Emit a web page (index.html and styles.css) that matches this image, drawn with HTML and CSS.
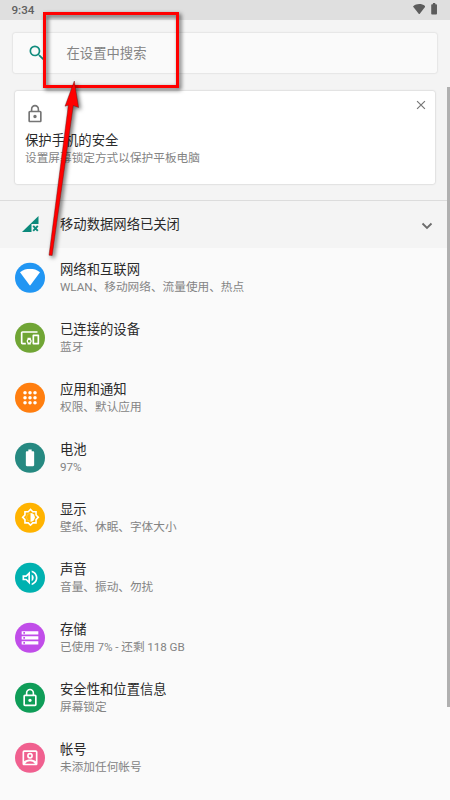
FILE: index.html
```html
<!DOCTYPE html>
<html lang="zh-CN">
<head>
<meta charset="utf-8">
<title>设置</title>
<link rel="stylesheet" href="styles.css">
</head>
<body>
<div class="screen">
  <header class="status">
    <span class="clock">9:34</span>
    <svg class="status-wifi" viewBox="0 0 24 20"><path d="M12 20 0 4.500C7-1.500 17-1.500 24 4.500Z"/></svg>
    <svg class="status-battery" viewBox="7 2 10 20"><path d="M15.670 4H14V2h-4v2H8.330C7.600 4 7 4.600 7 5.330v15.330C7 21.400 7.600 22 8.330 22h7.330c.740 0 1.340-.600 1.340-1.330V5.330C17 4.600 16.400 4 15.670 4z"/></svg>
  </header>
  <section class="top">
    <div class="search">
      <svg class="search-icon" viewBox="0 0 24 24"><path d="M15.500 14h-.790l-.280-.270A6.471 6.471 0 0 0 16 9.500 6.500 6.500 0 1 0 9.500 16c1.610 0 3.090-.590 4.230-1.570l.270.280v.790l5 4.990L20.490 19l-4.990-5zm-6 0C7.010 14 5 11.990 5 9.500S7.010 5 9.500 5 14 7.010 14 9.500 11.990 14 9.500 14z"/></svg>
      <span class="hint">在设置中搜索</span>
    </div>
    <div class="card">
      <div class="card-head">
        <svg class="card-lock" viewBox="0 0 24 24"><path d="M12 17c1.100 0 2-.900 2-2s-.900-2-2-2-2 .900-2 2 .900 2 2 2zm6-9h-1V6c0-2.760-2.240-5-5-5S7 3.240 7 6v2H6c-1.100 0-2 .900-2 2v10c0 1.100.900 2 2 2h12c1.100 0 2-.900 2-2V10c0-1.100-.900-2-2-2zM8.900 6c0-1.710 1.390-3.100 3.100-3.100s3.100 1.390 3.100 3.100v2H8.900V6zM18 20H6V10h12v10z"/></svg>
        <svg class="close" viewBox="0 0 14 14"><path d="M1.500 1.500l11 11M12.500 1.500l-11 11"/></svg>
      </div>
      <div class="title">保护手机的安全</div>
      <div class="sub">设置屏幕锁定方式以保护平板电脑</div>
    </div>
  </section>
  <section class="notice">
    <svg class="signal" viewBox="0 0 17 17"><path d="M16.500 0v8H9.500v8H0Z"/><path class="signal-x" d="M11.200 9.900l4.600 4.900M15.800 9.900l-4.600 4.900"/></svg>
    <span class="title">移动数据网络已关闭</span>
    <svg class="chevron" viewBox="0 0 12 8"><path d="M1.500 1.500 6 6l4.500-4.500"/></svg>
  </section>
  <main>
    <div class="row"><span class="disc blue"><svg class="wifi" viewBox="0 0 20 17"><path d="M10 17 0 3.500C6-1.100 14-1.100 20 3.500Z"/></svg></span><div><div class="title">网络和互联网</div><div class="sub">WLAN、移动网络、流量使用、热点</div></div></div>
    <div class="row"><span class="disc olive"><svg viewBox="0 0 24 24"><path d="M3 6h18V4H3c-1.100 0-2 .900-2 2v12c0 1.100.900 2 2 2h4v-2H3V6zm10 6H9v1.780c-.610.550-1 1.330-1 2.220s.390 1.670 1 2.220V20h4v-1.780c.610-.550 1-1.340 1-2.220s-.390-1.670-1-2.220V12zm-2 5.500c-.830 0-1.500-.670-1.500-1.500s.670-1.500 1.500-1.500 1.500.670 1.500 1.500-.670 1.500-1.500 1.500zM22 8h-6c-.500 0-1 .500-1 1v10c0 .500.500 1 1 1h6c.500 0 1-.500 1-1V9c0-.500-.500-1-1-1zm-1 10h-4v-8h4v8z"/></svg></span><div><div class="title">已连接的设备</div><div class="sub">蓝牙</div></div></div>
    <div class="row"><span class="disc orange"><svg viewBox="0 0 24 24"><g><circle cx="6" cy="6" r="2.100"/><circle cx="12" cy="6" r="2.100"/><circle cx="18" cy="6" r="2.100"/><circle cx="6" cy="12" r="2.100"/><circle cx="12" cy="12" r="2.100"/><circle cx="18" cy="12" r="2.100"/><circle cx="6" cy="18" r="2.100"/><circle cx="12" cy="18" r="2.100"/><circle cx="18" cy="18" r="2.100"/></g></svg></span><div><div class="title">应用和通知</div><div class="sub">权限、默认应用</div></div></div>
    <div class="row"><span class="disc teal"><svg viewBox="0 0 24 24"><path d="M15.670 4H14V2h-4v2H8.330C7.600 4 7 4.600 7 5.330v15.330C7 21.400 7.600 22 8.330 22h7.330c.740 0 1.340-.600 1.340-1.330V5.330C17 4.600 16.400 4 15.670 4z"/></svg></span><div><div class="title">电池</div><div class="sub">97%</div></div></div>
    <div class="row"><span class="disc amber"><svg viewBox="0 0 24 24"><path fill-rule="evenodd" d="M20 15.310 23.310 12 20 8.690V4h-4.690L12 .690 8.690 4H4v4.690L.690 12 4 15.310V20h4.690L12 23.310 15.310 20H20v-4.690zM18 14.480V18h-3.520L12 20.480 9.520 18H6v-3.520L3.520 12 6 9.520V6h3.520L12 3.520 14.480 6H18v3.520L20.480 12 18 14.480z"/><path d="M12 6.500a5.500 5.500 0 0 1 0 11z"/><path class="faint" d="M12 7a5 5 0 0 0 0 10"/></svg></span><div><div class="title">显示</div><div class="sub">壁纸、休眠、字体大小</div></div></div>
    <div class="row"><span class="disc cyan"><svg viewBox="0 0 24 24"><path d="M3 9v6h4l5 5V4L7 9H3zm7-.170v6.340L7.830 13H5v-2h2.830L10 8.830zM16.500 12A4.500 4.500 0 0 0 14 7.970v8.050A4.470 4.470 0 0 0 16.500 12zM14 3.230v2.060c2.890.860 5 3.540 5 6.710s-2.110 5.850-5 6.710v2.060c4.010-.910 7-4.490 7-8.770s-2.990-7.860-7-8.770z"/></svg></span><div><div class="title">声音</div><div class="sub">音量、振动、勿扰</div></div></div>
    <div class="row"><span class="disc purple"><svg viewBox="0 0 24 24"><path d="M2 20h20v-4H2v4zm2-3h2v2H4v-2zM2 4v4h20V4H2zm4 3H4V5h2v2zm-4 7h20v-4H2v4zm2-3h2v2H4v-2z"/></svg></span><div><div class="title">存储</div><div class="sub storage">已使用 7% - 还剩 118 GB</div></div></div>
    <div class="row"><span class="disc green"><svg viewBox="0 0 24 24"><path d="M12 17c1.100 0 2-.900 2-2s-.900-2-2-2-2 .900-2 2 .900 2 2 2zm6-9h-1V6c0-2.760-2.240-5-5-5S7 3.240 7 6v2H6c-1.100 0-2 .900-2 2v10c0 1.100.900 2 2 2h12c1.100 0 2-.900 2-2V10c0-1.100-.900-2-2-2zM8.900 6c0-1.710 1.390-3.100 3.100-3.100s3.100 1.390 3.100 3.100v2H8.900V6zM18 20H6V10h12v10z"/></svg></span><div><div class="title">安全性和位置信息</div><div class="sub">屏幕锁定</div></div></div>
    <div class="row"><span class="disc pink"><svg viewBox="0 0 24 24"><path d="M19 3H5a2 2 0 0 0-2 2v14c0 1.100.890 2 2 2h14c1.100 0 2-.900 2-2V5c0-1.100-.900-2-2-2zm0 2v11.200C17.200 14.700 14.700 14 12 14s-5.200.700-7 2.200V5h14zM6.500 19v-.400C7.700 17 9.900 16 12 16s4.300 1 5.500 2.600v.400h-11z"/><path fill-rule="evenodd" d="M12 6a3.500 3.500 0 1 0 0 7 3.500 3.500 0 0 0 0-7zm0 2a1.500 1.500 0 1 1 0 3 1.500 1.500 0 0 1 0-3z"/></svg></span><div><div class="title">帐号</div><div class="sub">未添加任何帐号</div></div></div>
  </main>
  <div class="scrollbar"></div>
  <div class="highlight"></div>
  <svg class="arrow" viewBox="0 0 60 190"><path d="M34.300 11 38.600 37.500 33.300 35.500 12.200 185.500 9 185.200 28.300 35.200 25 36.200Z"/></svg>
</div>
</body>
</html>
```
FILE: styles.css
```css
* { box-sizing: border-box; }
body {
  margin: 0;
  background: #fafafa;
  font-family: Roboto, "Noto Sans CJK SC", sans-serif;
}
svg { display: block; flex: none; }
.screen {
  position: relative;
  width: 450px;
  height: 800px;
  overflow: hidden;
}
.status {
  display: flex;
  align-items: center;
  height: 20px;
  padding: 0 12.500px 0 11.500px;
  background: #dfdfdf;
  color: #606060;
}
.clock { flex: 1; font-size: 11.670px; font-weight: 500; line-height: 20px; }
.status svg { fill: #5c5c5c; margin-bottom: 2px; }
.status-wifi { width: 12.500px; height: 10.500px; }
.status-battery { width: 6.200px; height: 11.500px; margin-left: 6px; }
.top {
  height: 181px;
  padding: 13px 13px 0;
  background: #f4f4f4;
  border-bottom: 1px solid #dcdcdc;
}
.search {
  display: flex;
  align-items: center;
  height: 40px;
  padding-left: 13.500px;
  background: #fafafa;
  border-radius: 2px;
  box-shadow: 0 0 2px rgba(0, 0, 0, .2);
}
.search-icon { width: 20px; height: 20px; fill: #128c7e; }
.hint { margin: 0 0 2px 20px; font-size: 13.330px; color: #848484; }
.card {
  height: 93px;
  margin: 18px 2px 0;
  padding: 0 10px;
  background: #fff;
  border-radius: 2px;
  box-shadow: 0 0 2px rgba(0, 0, 0, .26);
}
.card-head { display: flex; justify-content: space-between; height: 40px; }
.card-lock { width: 20px; height: 20px; margin-top: 13px; fill: #757575; }
.close { width: 10px; height: 10px; margin: 9px -.5px 0 0; fill: none; stroke: #777; stroke-width: 1.700; }
.title { font-size: 13.330px; line-height: 19px; color: #2a2a2a; white-space: nowrap; }
.sub { font-size: 11.670px; line-height: 17px; color: #848484; white-space: nowrap; }
.storage { letter-spacing: -.07px; }
.notice {
  display: flex;
  align-items: center;
  height: 46.500px;
  padding: 0 17px 0 22px;
  background: #f4f4f4;
}
.signal { width: 17px; height: 17px; margin-right: 21px; fill: #0b897b; }
.signal-x { fill: none; stroke: #0b897b; stroke-width: 1.900; }
.notice .title { flex: 1; }
.chevron { width: 12px; height: 8px; margin-top: 4px; fill: none; stroke: #6c6c6c; stroke-width: 1.800; }
.row { display: flex; align-items: center; height: 60px; padding-left: 15px; }
.disc {
  display: flex;
  align-items: center;
  justify-content: center;
  width: 30px;
  height: 30px;
  margin: 0 15px 0 0;
  border-radius: 50%;
  transform: translateY(-.2px);
}
.disc svg { width: 20px; height: 20px; fill: #fff; }
.disc .wifi { width: 20px; height: 17px; }
.disc .faint { fill: none; stroke: #fff; stroke-opacity: .3; stroke-width: 1; }
.blue { background: #2196f3; }
.olive { background: #70a535; }
.orange { background: #ff7e0f; }
.teal { background: #268981; }
.amber { background: #ffb300; }
.amber svg { width: 19px; height: 19px; }
.cyan { background: #00b1b0; }
.purple { background: #c04de9; }
.green { background: #0f9d58; }
.pink { background: #f0608f; }
.scrollbar {
  position: absolute;
  top: 87px;
  right: 0;
  width: 3.300px;
  height: 620px;
  background: #b0b0b0;
}
.highlight {
  position: absolute;
  left: 43px;
  top: 12px;
  width: 136px;
  height: 76px;
  border: 3px solid #f00;
  filter: drop-shadow(2px 2px 2px rgba(0, 0, 0, .65));
}
.arrow {
  position: absolute;
  left: 40px;
  top: 70px;
  width: 60px;
  height: 190px;
  fill: #f00;
  stroke: #5a1010;
  stroke-width: .4;
  filter: drop-shadow(2px 2px 2px rgba(0, 0, 0, .6));
}
```
